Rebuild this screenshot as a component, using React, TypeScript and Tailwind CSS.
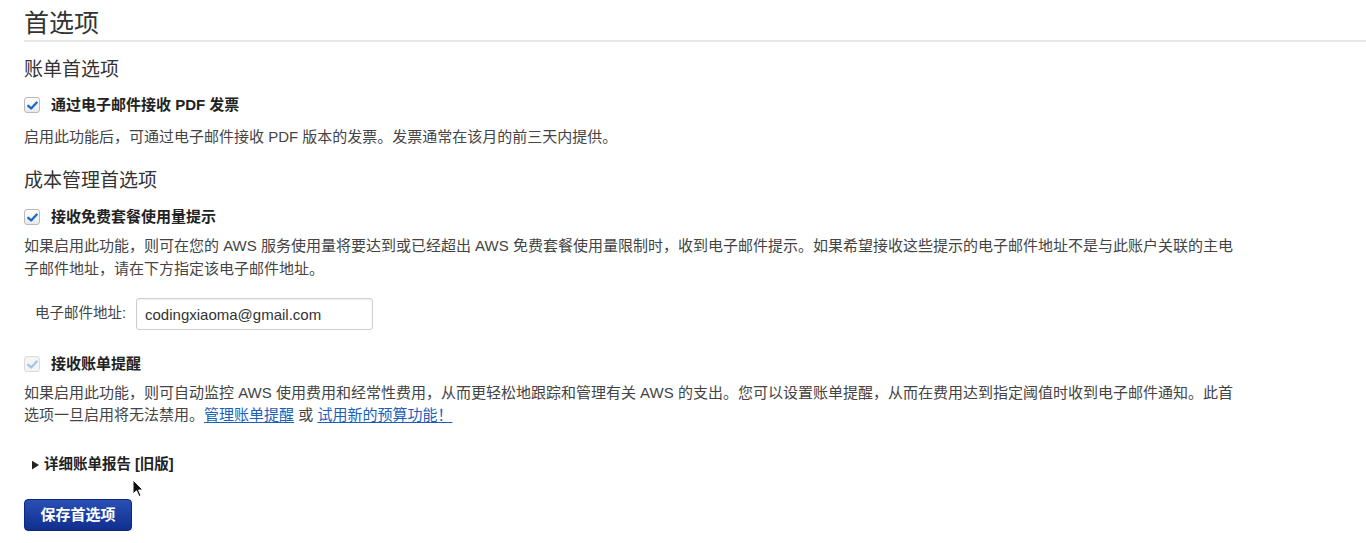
import React from "react";

const font = "font-['Liberation_Sans','Noto_Sans_CJK_SC',sans-serif]";

function CheckBox({ faded = false }: { faded?: boolean }) {
  return (
    <span
      className={`flex size-[16px] shrink-0 items-center justify-center rounded-[3px] border ${
        faded ? "border-[#dadada] bg-[#f4f4f4]" : "border-[#b9b9b9] bg-gradient-to-b from-white to-[#e9e9e9]"
      }`}
    >
      <svg viewBox="0 0 16 16" className="size-[13px]">
        <path
          d="M2.8 8.4 L6.4 11.6 L13.2 4.4"
          fill="none"
          stroke={faded ? "#a3c4e6" : "#1c68c9"}
          strokeWidth="2.8"
          strokeLinecap="round"
          strokeLinejoin="round"
        />
      </svg>
    </span>
  );
}

function CheckRow({ label, faded }: { label: string; faded?: boolean }) {
  return (
    <label className="flex h-5 items-center gap-[11px]">
      <CheckBox faded={faded} />
      <span className="text-[15px] font-bold text-[#222]">{label}</span>
    </label>
  );
}

function Cursor() {
  return (
    <svg
      viewBox="0 0 12 19"
      className="pointer-events-none absolute left-[132px] top-[479px] h-[19px] w-[12px]"
    >
      <path
        d="M1 1 L1 15 L4.5 11.8 L7 17.5 L9 16.6 L6.6 11 L11 11 Z"
        fill="#111"
        stroke="#fff"
        strokeWidth="1"
        strokeLinejoin="round"
      />
    </svg>
  );
}

export default function App() {
  return (
    <div className={`relative min-h-[543px] w-full bg-white pl-6 ${font} text-[#333]`}>
      {/* Page title */}
      <div className="border-b-2 border-[#e7e7e7] pt-2 pb-[2px]">
        <h1 className="text-[25px] leading-[30px] text-[#333]">首选项</h1>
      </div>

      {/* Billing preferences */}
      <h2 className="mt-[15px] text-[19px] leading-[26px] text-[#333]">账单首选项</h2>
      <div className="mt-[12px]">
        <CheckRow label="通过电子邮件接收 PDF 发票" />
      </div>
      <p className="mt-[10px] text-[15px] leading-[23px] text-[#444]">
        启用此功能后，可通过电子邮件接收 PDF 版本的发票。发票通常在该月的前三天内提供。
      </p>

      {/* Cost management preferences */}
      <h2 className="mt-[20px] text-[19px] leading-[26px] text-[#333]">成本管理首选项</h2>
      <div className="mt-[13px]">
        <CheckRow label="接收免费套餐使用量提示" />
      </div>
      <p className="mt-[7px] w-[1290px] text-[15px] leading-[23px] text-[#444]">
        如果启用此功能，则可在您的 AWS 服务使用量将要达到或已经超出 AWS
        免费套餐使用量限制时，收到电子邮件提示。如果希望接收这些提示的电子邮件地址不是与此账户关联的主电
        <br />
        子邮件地址，请在下方指定该电子邮件地址。
      </p>

      <div className="mt-[18px] flex items-center gap-[10px] pl-[11px]">
        <span className="text-[14.5px] text-[#444]">电子邮件地址:</span>
        <input
          readOnly
          value="codingxiaoma@gmail.com"
          className="h-[32px] w-[237px] rounded-[3px] border border-[#cfcfcf] bg-white px-[8px] text-[15px] text-[#333] shadow-[inset_0_1px_2px_rgba(0,0,0,0.08)] outline-none"
        />
      </div>

      <div className="mt-[24px]">
        <CheckRow label="接收账单提醒" faded />
      </div>
      <p className="mt-[8px] w-[1290px] text-[15px] leading-[22px] text-[#444]">
        如果启用此功能，则可自动监控 AWS 使用费用和经常性费用，从而更轻松地跟踪和管理有关 AWS
        的支出。您可以设置账单提醒，从而在费用达到指定阈值时收到电子邮件通知。此首
        <br />
        选项一旦启用将无法禁用。
        <a className="text-[#1d5fb8] underline underline-offset-2">管理账单提醒</a>
        <span> 或 </span>
        <a className="text-[#1d5fb8] underline underline-offset-2">试用新的预算功能！</a>
      </p>

      {/* Legacy report toggle */}
      <div className="mt-[29px] flex h-5 items-center gap-[5px] pl-[8px]">
        <svg viewBox="0 0 8 10" className="h-[10px] w-[7px]">
          <path d="M0 0 L8 5 L0 10 Z" fill="#222" />
        </svg>
        <span className="text-[14.5px] font-bold text-[#222]">详细账单报告 [旧版]</span>
      </div>

      <button className="mt-[24px] h-[32px] w-[108px] rounded-[4px] border border-[#0d2a7a] bg-gradient-to-b from-[#2a4fb4] to-[#102f8f] text-[15px] font-bold text-white">
        保存首选项
      </button>

      <Cursor />
    </div>
  );
}
